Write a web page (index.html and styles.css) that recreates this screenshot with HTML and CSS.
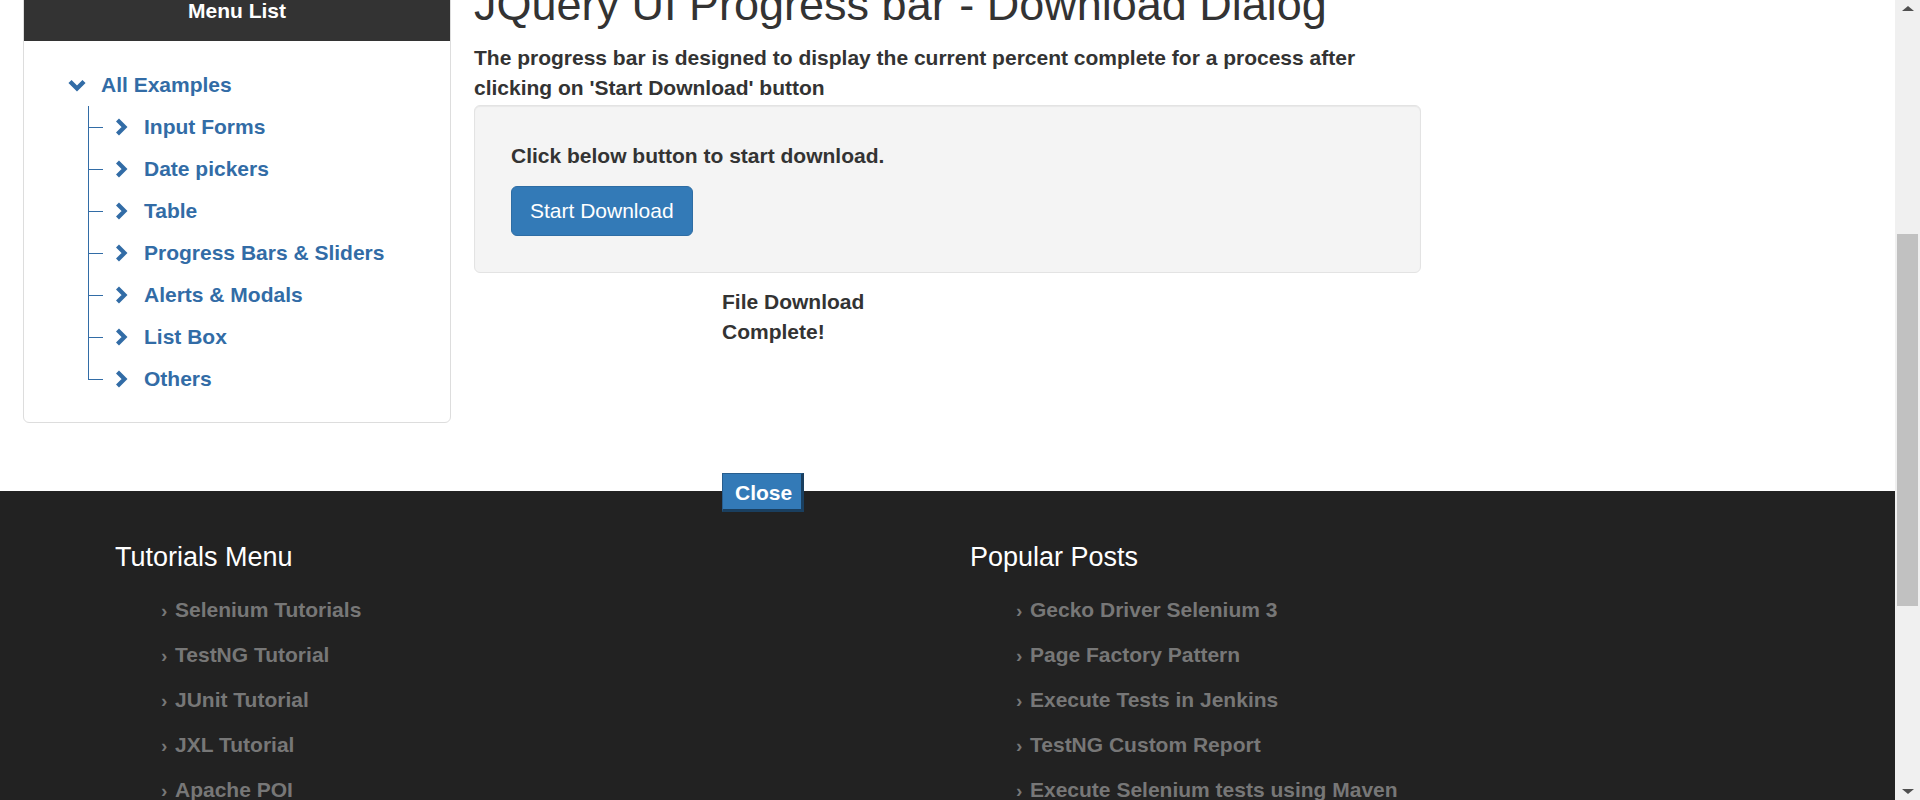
FILE: index.html
```html
<!DOCTYPE html>
<html lang="en">
<head>
<meta charset="utf-8">
<title>JQuery UI Progress bar - Download Dialog</title>
<link rel="stylesheet" href="styles.css">
</head>
<body>
<div class="page">
  <div class="viewport">
    <div class="content-row">
      <aside class="sidebar">
        <div class="sidebar-head">Menu List</div>
        <div class="sidebar-body">
          <ul class="tree">
            <li class="tree-root">
              <div class="root-row">
                <svg class="chev-down" width="20" height="13" viewBox="0 0 20 13"><polyline points="3,2.5 10,9.5 17,2.5" fill="none" stroke="currentColor" stroke-width="4.4"/></svg>
                <a href="#">All Examples</a>
              </div>
              <ul class="children">
                <li><svg class="chev-right" width="13" height="18" viewBox="0 0 13 18"><polyline points="2.5,2 9.5,9 2.5,16" fill="none" stroke="currentColor" stroke-width="4.2"/></svg><a href="#">Input Forms</a></li>
                <li><svg class="chev-right" width="13" height="18" viewBox="0 0 13 18"><polyline points="2.5,2 9.5,9 2.5,16" fill="none" stroke="currentColor" stroke-width="4.2"/></svg><a href="#">Date pickers</a></li>
                <li><svg class="chev-right" width="13" height="18" viewBox="0 0 13 18"><polyline points="2.5,2 9.5,9 2.5,16" fill="none" stroke="currentColor" stroke-width="4.2"/></svg><a href="#">Table</a></li>
                <li><svg class="chev-right" width="13" height="18" viewBox="0 0 13 18"><polyline points="2.5,2 9.5,9 2.5,16" fill="none" stroke="currentColor" stroke-width="4.2"/></svg><a href="#">Progress Bars &amp; Sliders</a></li>
                <li><svg class="chev-right" width="13" height="18" viewBox="0 0 13 18"><polyline points="2.5,2 9.5,9 2.5,16" fill="none" stroke="currentColor" stroke-width="4.2"/></svg><a href="#">Alerts &amp; Modals</a></li>
                <li><svg class="chev-right" width="13" height="18" viewBox="0 0 13 18"><polyline points="2.5,2 9.5,9 2.5,16" fill="none" stroke="currentColor" stroke-width="4.2"/></svg><a href="#">List Box</a></li>
                <li><svg class="chev-right" width="13" height="18" viewBox="0 0 13 18"><polyline points="2.5,2 9.5,9 2.5,16" fill="none" stroke="currentColor" stroke-width="4.2"/></svg><a href="#">Others</a></li>
              </ul>
            </li>
          </ul>
        </div>
      </aside>
      <main class="main">
        <h2 class="title">JQuery UI Progress bar - Download Dialog</h2>
        <p class="intro">The progress bar is designed to display the current percent complete for a process after clicking on 'Start Download' button</p>
        <div class="well">
          <p class="well-text">Click below button to start download.</p>
          <button class="btn-primary" type="button">Start Download</button>
        </div>
        <div class="dialog">
          <div class="dialog-text">File Download Complete!</div>
          <button class="btn-close" type="button">Close</button>
        </div>
      </main>
    </div>
    <footer class="footer">
      <div class="footer-col">
        <h4 class="footer-title">Tutorials Menu</h4>
        <ul class="footer-list">
          <li><span class="arrow">›</span>Selenium Tutorials</li>
          <li><span class="arrow">›</span>TestNG Tutorial</li>
          <li><span class="arrow">›</span>JUnit Tutorial</li>
          <li><span class="arrow">›</span>JXL Tutorial</li>
          <li><span class="arrow">›</span>Apache POI</li>
        </ul>
      </div>
      <div class="footer-col">
        <h4 class="footer-title">Popular Posts</h4>
        <ul class="footer-list">
          <li><span class="arrow">›</span>Gecko Driver Selenium 3</li>
          <li><span class="arrow">›</span>Page Factory Pattern</li>
          <li><span class="arrow">›</span>Execute Tests in Jenkins</li>
          <li><span class="arrow">›</span>TestNG Custom Report</li>
          <li><span class="arrow">›</span>Execute Selenium tests using Maven</li>
        </ul>
      </div>
    </footer>
  </div>
  <div class="scrollbar">
    <div class="sb-btn"><span class="sb-up"></span></div>
    <div class="sb-track"><div class="sb-thumb"></div></div>
    <div class="sb-btn"><span class="sb-down"></span></div>
  </div>
</div>
</body>
</html>
```
FILE: styles.css
```css
* { box-sizing: border-box; }
html, body {
  margin: 0;
  padding: 0;
  height: 800px;
  overflow: hidden;
  background: #fff;
}
body {
  font-family: "Liberation Sans", Arial, sans-serif;
  font-size: 21px;
  line-height: 30px;
  color: #333;
}
ul { list-style: none; margin: 0; padding: 0; }
a { color: #326ca6; text-decoration: none; }

.page {
  display: flex;
  height: 800px;
}
.viewport {
  flex: 1;
  display: flex;
  flex-direction: column;
  overflow: hidden;
}

.content-row {
  display: flex;
  align-items: flex-start;
  gap: 23px;
  padding-left: 23px;
}

/* Sidebar */
.sidebar {
  width: 428px;
  margin-top: -20px;
  border: 1px solid #ddd;
  border-radius: 6px;
  overflow: hidden;
  background: #fff;
}
.sidebar-head {
  background: #333;
  color: #fff;
  font-weight: bold;
  text-align: center;
  padding: 15px;
  line-height: 30px;
}
.sidebar-body {
  padding: 23px 0 22px;
}
.root-row {
  display: flex;
  align-items: center;
  gap: 14px;
  height: 42px;
  padding-left: 43px;
  color: #326ca6;
  font-weight: bold;
}
.chev-down, .chev-right { color: #326ca6; flex: none; }
.children { margin-left: 64px; }
.children li {
  position: relative;
  display: flex;
  align-items: center;
  gap: 16px;
  height: 42px;
  padding-left: 27px;
  font-weight: bold;
}
.children li::before {
  content: "";
  position: absolute;
  left: 0;
  top: 0;
  width: 14px;
  height: 21px;
  border-left: 1px solid #326ca6;
  border-bottom: 1px solid #326ca6;
}
.children li::after {
  content: "";
  position: absolute;
  left: 0;
  top: 21px;
  bottom: 0;
  border-left: 1px solid #326ca6;
}
.children li:last-child::after { display: none; }

/* Main */
.main {
  width: 947px;
}
.title {
  margin: -20px 0 13px;
  font-size: 45px;
  line-height: 49.5px;
  font-weight: normal;
  color: #333;
}
.intro {
  margin: 0 0 2px;
  font-weight: bold;
}
.well {
  background: #f4f4f4;
  border: 1px solid #e3e3e3;
  border-radius: 6px;
  box-shadow: inset 0 1px 1px rgba(0,0,0,.05);
  padding: 35px 36px 36px;
}
.well-text {
  margin: 0 0 15px;
  font-weight: bold;
}
.btn-primary {
  display: inline-block;
  font-family: inherit;
  font-size: 21px;
  line-height: 30px;
  padding: 9px 18px;
  color: #fff;
  background: #337ab7;
  border: 1px solid #2e6da4;
  border-radius: 6px;
}
.dialog {
  margin: 14px 0 0 248px;
}
.dialog-text {
  width: 150px;
  font-weight: bold;
}
.btn-close {
  display: block;
  position: relative;
  z-index: 1;
  margin: 126px 0 -21px;
  font-family: inherit;
  font-size: 21px;
  font-weight: bold;
  line-height: 24px;
  color: #fff;
  background: #337ab7;
  border-style: solid;
  border-width: 1px 3px 3px 1px;
  border-color: #285e8e #1a3f5f #1a3f5f #285e8e;
  padding: 7px 9px 4px 12px;
}

/* Footer */
.footer {
  flex: 1;
  background: #222;
  display: flex;
  padding: 51px 0 0 115px;
  overflow: hidden;
}
.footer-col { width: 855px; }
.footer-title {
  margin: 0 0 15px;
  font-size: 27px;
  line-height: 30px;
  font-weight: normal;
  color: #fff;
}
.footer-list li {
  height: 45px;
  line-height: 45px;
  padding-left: 46px;
  color: #777;
  font-weight: bold;
  white-space: nowrap;
}
.arrow {
  display: inline-block;
  width: 14px;
  font-size: 19px;
}

/* Scrollbar */
.scrollbar {
  width: 25px;
  background: #f0f0f0;
  display: flex;
  flex-direction: column;
  align-items: center;
}
.sb-btn {
  height: 25px;
  width: 25px;
  display: flex;
  align-items: center;
  justify-content: center;
}
.sb-up, .sb-down {
  width: 0;
  height: 0;
  border-left: 6px solid transparent;
  border-right: 6px solid transparent;
}
.sb-up { border-bottom: 5px solid #505050; margin-top: -8px; }
.sb-down { border-top: 5px solid #505050; margin-top: 7px; }
.sb-track {
  flex: 1;
  padding-top: 209px;
}
.sb-thumb {
  width: 21px;
  height: 372px;
  background: #c1c1c1;
}
```
